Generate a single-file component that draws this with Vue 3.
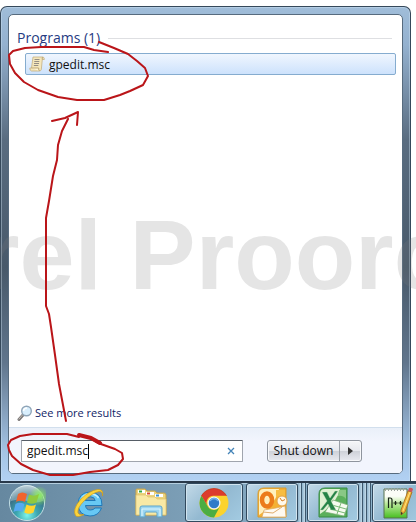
<template>
  <div class="desktop">
    <main class="start-menu">
      <div class="panel">
        <section class="results">
          <h1 class="group-title">
            <span>Programs (1)</span>
            <span class="rule"></span>
          </h1>
          <button type="button" class="result">
            <svg class="result-icon" viewBox="0 0 16 16" aria-hidden="true">
              <path d="M4 1h10q1.500.300 1.300 2.500h-2l-1 10q-.300 1.500-2 1.500H2.500Q.700 14.600.800 12h1.700z" fill="#f5e7bb" stroke="#c4b083" stroke-width=".800" />
              <path d="M13.300 3.500q-.500-2.200.700-2.500M2.500 12h7.200q-.300 2.500.800 3" fill="#fff7db" stroke="#ae965f" stroke-width=".800" />
              <path d="M5.500 3.500h5M5.300 5.500h5M5 7.500h5M4.800 9.500h4.500" stroke="#958e84" />
            </svg>
            <span>gpedit.msc</span>
          </button>
          <a href="#" class="more" @click.prevent>
            <svg class="more-icon" viewBox="0 0 16 16" aria-hidden="true">
              <path d="M6 10 2 14.500" stroke="#7b7878" stroke-width="3" stroke-linecap="round" />
              <path d="M5.500 10 2 14" stroke="#c6c0b8" stroke-linecap="round" />
              <circle cx="9.500" cy="6" r="4.800" fill="#d9effd" stroke="#8fa5b8" stroke-width="1.400" />
              <path d="M6.500 6q.300-3 3.500-3" fill="none" stroke="#fff" stroke-width="1.500" />
            </svg>
            <span>See more results</span>
          </a>
        </section>

        <footer class="footer">
          <div class="search">
            <input v-model="query" type="text" class="search-input" aria-label="Search programs and files">
            <span class="caret"></span>
            <button type="button" class="clear" aria-label="Clear" @click="query = ''">
              <svg viewBox="0 0 8 8" aria-hidden="true">
                <path d="M1 1l6 6M7 1 1 7" stroke="#4484b8" stroke-width="1.300" />
              </svg>
            </button>
          </div>
          <div class="power">
            <button type="button" class="power-main">Shut down</button>
            <button type="button" class="power-more" aria-label="Shut down options">
              <svg viewBox="0 0 5 8" aria-hidden="true"><path d="M0 0l5 4-5 4z" fill="#333" /></svg>
            </button>
          </div>
        </footer>
      </div>
    </main>

    <nav class="taskbar">
      <button type="button" class="pin orb" aria-label="Start">
        <svg viewBox="0 0 38 38" aria-hidden="true">
          <defs>
            <radialGradient id="orb" cx=".5" cy=".85" r=".85">
              <stop offset="0" stop-color="#7df5ec" />
              <stop offset=".35" stop-color="#3da7b0" />
              <stop offset=".7" stop-color="#3a7288" />
              <stop offset="1" stop-color="#a5bfca" />
            </radialGradient>
            <radialGradient id="glow">
              <stop offset="0" stop-color="#8cf05a" />
              <stop offset="1" stop-color="#8cf05a" stop-opacity="0" />
            </radialGradient>
          </defs>
          <circle cx="19" cy="19" r="17.500" fill="url(#orb)" stroke="#c5e0e6" />
          <path d="M3 17a16 16 0 0 1 32 0Q26 20 19 17T3 17z" fill="#fff" opacity=".3" />
          <circle cx="31" cy="12" r="10" fill="url(#glow)" />
          <path d="M10 10q4-3 9 0l-2 8q-5-2.500-9 0z" fill="#f0642e" />
          <path d="M21 10.500q5 2.500 10-.500l-2.500 8.500q-5 2.500-9.500 0z" fill="#90ca3e" />
          <path d="M7.500 20q4-2.500 9 0l-2.300 8q-4-2.500-8.700 0z" fill="#55aaf1" />
          <path d="M18.500 20.500q5 2.500 9.500 0l-2.500 8q-4.500 2.500-9.300 0z" fill="#ffd52e" />
        </svg>
      </button>
      <button type="button" class="pin" aria-label="Internet Explorer">
        <svg viewBox="0 0 32 32" aria-hidden="true">
          <path d="M29 18.500H12.500q.500 4.500 5 4.500 3 0 4.500-2h6.500Q25.500 29 17 29 5.500 28.500 5 17 5.500 5.500 17 5 29 5.500 29 18.500zM12.200 13.500h10Q21.500 9.800 17.300 9.800t-5.100 3.700z" fill="#67c8f4" stroke="#2079b9" />
          <path d="M8 15q1-8 9-8 6 0 8.500 4" fill="none" stroke="#c4efff" stroke-width="1.500" />
          <path d="M29.500 9Q31 2 24.500 2.500 16.500 3.500 8 12-1 22 2.500 28.500 4.500 31 11 27.500q-5 1-6-1.500-1-5 6-12Q19.500 5.500 26 4.500q4-.300 3.500 4.500z" fill="#fbd43c" stroke="#d19d19" stroke-width=".700" />
        </svg>
      </button>
      <button type="button" class="pin" aria-label="Windows Explorer">
        <svg viewBox="0 0 32 32" aria-hidden="true">
          <path d="M1 3q0-1 1-1h8l2 2h8l2 2h7q2 0 2 2v20H1z" fill="#ecd37c" stroke="#c6a44e" />
          <path d="M3 3h7v3H3z" fill="#fff" /><path d="M4 3.500h3v2H4z" fill="#30a844" />
          <path d="M11 5h8v3h-8z" fill="#fff" /><path d="M12 5.500h3v2h-3z" fill="#d84835" />
          <path d="M20 7h8v3h-8z" fill="#fff" /><path d="M21 7.500h3v2h-3z" fill="#3a91d4" />
          <path d="M1 8h10l2 2h7l2 2h9v16H1z" fill="#f9e9a5" stroke="#dec36e" stroke-width=".700" />
          <path d="M5 30V21q0-2 2-2h18q2 0 2 2v9h-5v-4q0-1-1-1H11q-1 0-1 1v4z" fill="#9cd6f1" stroke="#5fa5ca" />
          <path d="M7 29v-7h18v7" fill="none" stroke="#e1f7ff" />
        </svg>
      </button>
      <button type="button" class="task chrome" aria-label="Google Chrome">
        <svg viewBox="0 0 32 32" aria-hidden="true">
          <circle cx="16" cy="16" r="14.500" fill="#fbd32d" />
          <path d="M3.450 8.750A14.500 14.500 0 0 1 28.550 8.750H16a7 7 0 0 0-6.200 11z" fill="#dc3c2d" />
          <path d="M3.450 8.750A14.500 14.500 0 0 0 16 30.500l6.100-11.300a7 7 0 0 1-12.300.300z" fill="#4cad42" />
          <path d="M3.450 8.750A14.500 14.500 0 0 1 28.550 8.750" fill="none" stroke="#b72820" stroke-width=".700" />
          <circle cx="16" cy="16" r="6.500" fill="#eef3f5" />
          <circle cx="16" cy="16" r="5.200" fill="#2f7bc9" />
          <path d="M12 14a4.500 4.500 0 0 1 8 0" fill="none" stroke="#75b4e9" stroke-width="1.500" />
        </svg>
      </button>
      <button type="button" class="task" aria-label="Outlook">
        <svg viewBox="0 0 32 32" aria-hidden="true">
          <path d="M8 1h22v29H2V7q0-6 6-6z" fill="#f4b034" stroke="#d99a2c" />
          <path d="M8 2h15Q20 17 3 28V7q0-5 5-5z" fill="#fff0bd" />
          <path d="M20 3h9v8q-4-3-9-1z" fill="#f8bd42" />
          <path d="M6 30 8 23l12-2 9-2 1 11z" fill="#fffaf0" stroke="#dea85a" stroke-width=".700" />
          <path d="M7 25l10 1 9-6" fill="none" stroke="#dfac6b" />
          <ellipse cx="11" cy="13" rx="5" ry="6.500" fill="none" stroke="#ec7c1b" stroke-width="4.500" />
          <circle cx="26" cy="14" r="5" fill="#fff9eb" stroke="#e2a34b" />
          <path d="M24 11l2 3 3-1.500" fill="none" stroke="#d77d22" />
        </svg>
      </button>
      <span class="stack"></span>
      <span class="stack"></span>
      <button type="button" class="task" aria-label="Excel">
        <svg viewBox="0 0 32 32" aria-hidden="true">
          <path d="M8 1h22v29H2V7q0-6 6-6z" fill="#5bb05c" stroke="#368a43" />
          <path d="M8 2h15Q20 16 3 27V7q0-5 5-5z" fill="#e0f1d4" />
          <path d="M22 3h7v9q-3-4-8-3z" fill="#89c885" />
          <path d="M16 13l15 5-4 11-19-4z" fill="#f5fbef" stroke="#75ab71" stroke-width=".700" />
          <path d="M15 18l14 4M13 22l15 4M24 16l-4 11" stroke="#79b976" />
          <path d="M5 5h5l3 6 5-7h3l-7 10 5 9h-5l-3-6-5 6H3l7-9z" fill="#258347" stroke="#cce6c3" stroke-width=".400" />
        </svg>
      </button>
      <span class="stack"></span>
      <span class="stack"></span>
      <span class="stack"></span>
      <button type="button" class="task" aria-label="Notepad++">
        <svg class="tall" viewBox="0 0 32 34" aria-hidden="true">
          <defs>
            <linearGradient id="note" x2="0" y2="1">
              <stop offset=".25" stop-color="#fbfdf7" />
              <stop offset=".5" stop-color="#bcea9d" />
              <stop offset="1" stop-color="#47bf21" />
            </linearGradient>
          </defs>
          <path d="M2 3h23v29H2z" fill="url(#note)" stroke="#56734e" />
          <path d="M3 3.500h21" stroke="#9ba29e" stroke-width="3" stroke-dasharray="1 2" />
          <path d="M6.500 22V12h1.500q2 0 2 2v8M11.500 17h4M13.500 15v4M16.500 17h4M18.500 15v4" fill="none" stroke="#172317" stroke-width="1.200" />
          <path d="M26 5l4 1-7 20-4 3v-5z" fill="#efb73c" stroke="#ad7425" />
          <path d="M28 6l-7 19" stroke="#ffe080" />
          <path d="M26 5l1-3q2-1 4 1l-1 3z" fill="#cb535c" />
          <path d="M19 29v-3l2 1z" fill="#39342b" />
        </svg>
      </button>
    </nav>

    <div class="watermark" aria-hidden="true">rel Proorc</div>

    <svg class="ink" width="416" height="522" aria-hidden="true">
      <path d="M99 42l15 6 14 6 9 7 8 7 3 8-5 9-13 6-10 4-16 5H77l-19-3-20-7-14-8-9-9-5-9-1-9 4-4 12-3 16-1h43l10 3 14 2" />
      <path d="M66 421l-3-16-4-21-4-29-4-28-2-13-3-8v-88l3-17 4-25 4-16 1-15 4-14 6-12M52 121l13-3 13-6-1 13" />
      <path d="M79 435l11 3 8 5 17 6 7 4 1 6-5 6-10 5-18 2-17 3H50l-17-5-12-6-9-8-3-6-1-5 3-5 9-4 13-2h34l12 3" />
      <path d="M79 435l12 3 9 5" stroke-width="4" />
    </svg>
  </div>
</template>

<script setup>
import { ref } from 'vue'

const query = ref('gpedit.msc')
</script>

<style>
body {
  margin: 0;
  background: #fff;
}
</style>

<style scoped>
.desktop {
  position: relative;
  display: flex;
  flex-direction: column;
  min-height: 100vh;
  overflow: hidden;
  font-family: "Open Sans", "Noto Sans", sans-serif;
  font-size: 12px;
  color: #111;
}

.desktop * {
  box-sizing: border-box;
}

button {
  padding: 0;
  border: 0;
  background: none;
  font: inherit;
  color: inherit;
}

svg {
  display: block;
}

.start-menu {
  flex: 1;
  display: flex;
  margin: 6px 5px 0 0;
  padding: 7px;
  border: 1px solid #35485a;
  border-bottom: 0;
  border-radius: 7px 7px 0 0;
  background: linear-gradient(#a0bdd9 0, #94b1cf 8%, #596c80 28%, #48596a 55%, #60758c 75%, #a5c5e6 94%, #b2d1f3 100%);
  box-shadow: inset 0 0 0 1px rgba(210, 230, 245, 0.4);
}

.panel {
  flex: 1;
  display: flex;
  flex-direction: column;
  border: 1px solid #576b7e;
  border-radius: 5px;
  background: #fff;
  overflow: hidden;
}

.results {
  flex: 1;
  display: flex;
  flex-direction: column;
  padding: 12px 6px 5px 8px;
}

.group-title {
  display: flex;
  align-items: center;
  gap: 8px;
  margin: 0 4px 4px 0;
  font-size: 14px;
  font-weight: 400;
  line-height: 22px;
  color: #263b82;
}

.rule {
  flex: 1;
  height: 1px;
  background: #dedfe2;
}

.result {
  display: flex;
  align-items: center;
  gap: 4px;
  height: 22px;
  margin-left: 8px;
  padding: 0 3px;
  border: 1px solid #85accf;
  border-radius: 2px;
  background: linear-gradient(#f0f6fe, #cde2fc);
}

.result-icon {
  width: 16px;
  height: 16px;
}

.more {
  display: flex;
  align-items: center;
  gap: 2px;
  margin-top: auto;
  font-size: 11px;
  line-height: 18px;
  color: #0f1c66;
  text-decoration: none;
}

.more-icon {
  width: 16px;
  height: 16px;
}

.footer {
  display: flex;
  align-items: center;
  gap: 24px;
  height: 46px;
  padding: 0 40px 0 12px;
  border-top: 1px solid #d2dfed;
  background: linear-gradient(#eaf0f9, #f2f5fd 30%);
}

.search {
  position: relative;
  flex: 1;
  display: flex;
  height: 22px;
  max-width: 222px;
  border: 1px solid #a0a5ae;
  border-top-color: #565d66;
  border-radius: 1px;
  background: #fff;
}

.search-input {
  flex: 1;
  min-width: 0;
  padding: 0 5px;
  border: 0;
  outline: none;
  background: none;
  font: inherit;
  color: inherit;
}

.caret {
  position: absolute;
  top: 3px;
  left: 66px;
  width: 1px;
  height: 15px;
  background: #000;
}

.clear {
  display: grid;
  place-items: center;
  width: 22px;
}

.clear svg {
  width: 8px;
  height: 8px;
}

.power {
  display: flex;
  height: 22px;
  border: 1px solid #8f959e;
  border-radius: 3px;
  background: linear-gradient(#f5f6f8 0, #e7e9ee 48%, #cfd2d9 52%, #e8eaf0 100%);
  box-shadow: inset 0 0 0 1px #f8f9fb;
}

.power-main {
  width: 71px;
}

.power-more {
  display: grid;
  place-items: center;
  width: 22px;
  border-left: 1px solid #9aa0a8;
}

.power-more svg {
  width: 5px;
  height: 8px;
}

.taskbar {
  display: flex;
  height: 41px;
  border-top: 2px solid #29394a;
  background: linear-gradient(90deg, #6688a0, #7799b1 35%, #87acc4 70%, #91b8d0);
  box-shadow: inset 0 1px 0 #b4cede;
  overflow: hidden;
}

.pin,
.task {
  display: grid;
  place-items: center;
  flex: none;
}

.pin {
  width: 62px;
}

.orb {
  width: 54px;
  margin-right: 4px;
}

.pin svg,
.task svg {
  width: 32px;
  height: 32px;
}

.orb svg {
  width: 38px;
  height: 38px;
}

.task .tall {
  height: 34px;
}

.task {
  width: 52px;
  margin-left: 3px;
  border: 1px solid #31495d;
  border-radius: 3px;
  background: linear-gradient(135deg, #c3dae8, #93b9d1 50%, #a3cbe2);
  box-shadow: inset 0 0 0 1px #d1e4ef;
}

.chrome {
  width: 58px;
}

.stack {
  flex: none;
  width: 4px;
  border-right: 1px solid #3d586d;
  background: linear-gradient(90deg, #8db2ca, #c4dcea);
}

.stack + .task {
  margin-left: 1px;
}

.watermark {
  position: absolute;
  top: 198px;
  left: -19px;
  font-family: "Liberation Sans", Arial, sans-serif;
  font-size: 99px;
  font-weight: 700;
  line-height: 114px;
  white-space: nowrap;
  color: rgba(125, 125, 125, 0.2);
  pointer-events: none;
}

.ink {
  position: absolute;
  top: 0;
  left: 0;
  fill: none;
  stroke: #ba1519;
  stroke-width: 2;
  stroke-linecap: round;
  stroke-linejoin: round;
  pointer-events: none;
}
</style>
